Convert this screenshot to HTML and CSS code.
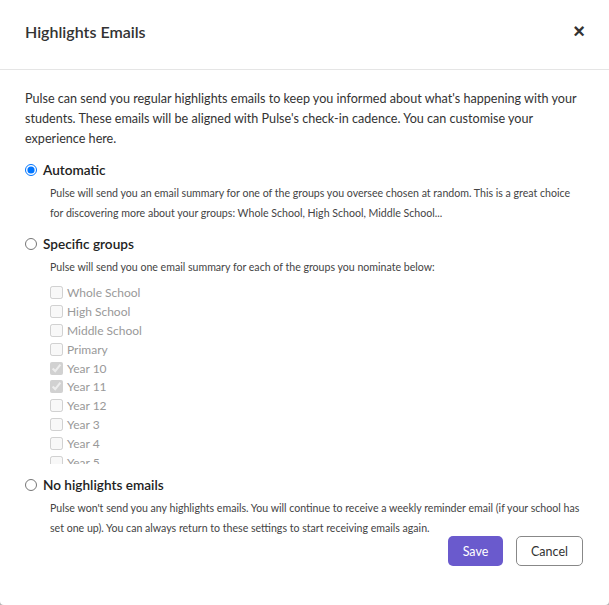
FILE: index.html
```html
<!DOCTYPE html>
<html lang="en">
<head>
    <meta charset="UTF-8">
    <meta name="viewport" content="width=device-width, initial-scale=1.0">
    <title>Highlights Emails</title>
    <link rel="stylesheet" href="styles.css">
</head>
<body>

    <div class="modal">
        <div class="modal-header">
            <h2>Highlights Emails</h2>
            <button type="button" class="close-button">&times;</button>
        </div>

        <form class="modal-body">
            <p class="intro">Pulse can send you regular highlights emails to keep you informed about what's happening with your students. These emails will be aligned with Pulse's check-in cadence. You can customise your experience here.</p>

            <div class="option">
                <label class="option-label"><input type="radio" name="mode" value="automatic" checked> Automatic</label>
                <p class="option-desc">Pulse will send you an email summary for one of the groups you oversee chosen at random. This is a great choice for discovering more about your groups: Whole School, High School, Middle School...</p>
            </div>

            <div class="option">
                <label class="option-label"><input type="radio" name="mode" value="specific"> Specific groups</label>
                <p class="option-desc">Pulse will send you one email summary for each of the groups you nominate below:</p>
                <div class="group-list">
                    <label><input type="checkbox" disabled> Whole School</label>
                    <label><input type="checkbox" disabled> High School</label>
                    <label><input type="checkbox" disabled> Middle School</label>
                    <label><input type="checkbox" disabled> Primary</label>
                    <label><input type="checkbox" disabled checked> Year 10</label>
                    <label><input type="checkbox" disabled checked> Year 11</label>
                    <label><input type="checkbox" disabled> Year 12</label>
                    <label><input type="checkbox" disabled> Year 3</label>
                    <label><input type="checkbox" disabled> Year 4</label>
                    <label><input type="checkbox" disabled> Year 5</label>
                    <label><input type="checkbox" disabled> Year 6</label>
                </div>
            </div>

            <div class="option">
                <label class="option-label"><input type="radio" name="mode" value="none"> No highlights emails</label>
                <p class="option-desc">Pulse won't send you any highlights emails. You will continue to receive a weekly reminder email (if your school has set one up). You can always return to these settings to start receiving emails again.</p>
            </div>

            <div class="modal-footer">
                <button type="submit" class="save-button">Save</button>
                <button type="button" class="cancel-button">Cancel</button>
            </div>
        </form>
    </div>

</body>
</html>
```

FILE: styles.css
```css
body {
    font-family: Lato, "Noto Sans", sans-serif;
    margin: 0;
    padding: 0;
    background-color: #b5b5b5;
    color: #333;
}
.modal {
    height: 605px;
    background: #fff;
    border-radius: 0 0 4px 4px;
    overflow: hidden;
}
.modal-header {
    display: flex;
    align-items: center;
    justify-content: space-between;
    height: 63px;
    padding: 0 25px 6px;
    border-bottom: 1px solid #e5e5e5;
}
.modal-header h2 {
    margin: 0;
    font-size: 16px;
    font-weight: 600;
    color: #333;
}
.close-button {
    background: none;
    border: none;
    padding: 0;
    font-family: Arial, sans-serif;
    font-size: 20px;
    font-weight: bold;
    color: #333;
    cursor: pointer;
    margin-right: -1px;
}
.modal-body {
    padding: 19px 25px 0;
}
.intro {
    margin: 0 0 10px;
    font-size: 12.6px;
    line-height: 20px;
}
.option {
    margin-bottom: 10px;
}
.option-label {
    display: flex;
    align-items: center;
    height: 22px;
    font-size: 13.6px;
    font-weight: 600;
    color: #222;
}
.option-label input {
    width: 12px;
    height: 12px;
    margin: 0 6px 0 0;
}
.option-desc {
    margin: 2px 0 0 25px;
    font-size: 10.6px;
    line-height: 20px;
    color: #444;
}
.group-list {
    margin: 6px 0 1px 25px;
    height: 181px;
    overflow: hidden;
}
.group-list label {
    display: flex;
    align-items: center;
    height: 18.9px;
    font-size: 12px;
    color: #999;
}
.group-list input {
    width: 13px;
    height: 13px;
    margin: 0 4px 0 0;
}
.modal-footer {
    display: flex;
    justify-content: flex-end;
    gap: 13px;
    margin-top: -12px;
}
.save-button, .cancel-button {
    height: 30px;
    border-radius: 5px;
    font-family: inherit;
    font-size: 12.5px;
    cursor: pointer;
}
.save-button {
    width: 55px;
    background-color: #6a5acd;
    color: #fff;
    border: none;
}
.cancel-button {
    width: 67px;
    margin-right: 1px;
    background: #fff;
    color: #333;
    border: 1px solid #888;
}
```
